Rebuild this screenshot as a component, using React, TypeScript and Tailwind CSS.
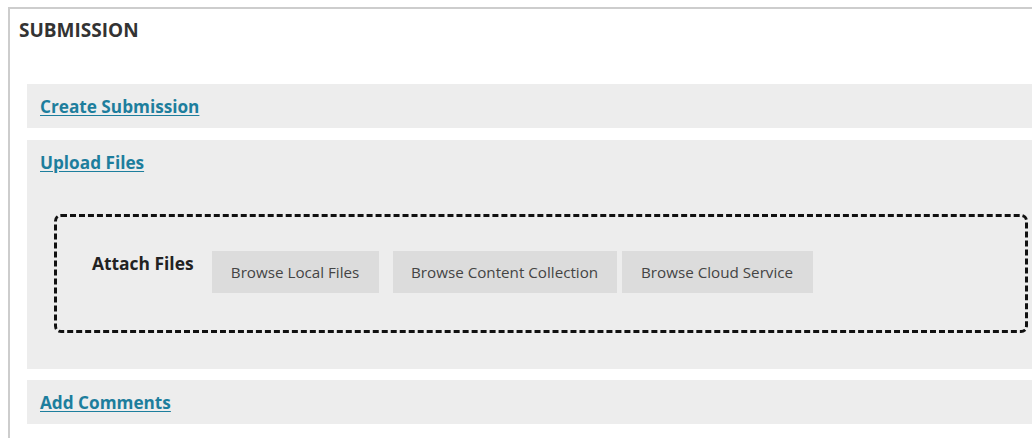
export default function App() {
  const font = { fontFamily: '"Open Sans", "Noto Sans", sans-serif' };
  return (
    <div className="h-[438px] w-[1032px] overflow-hidden bg-white pl-[8px] pt-[7px]" style={font}>
      <section className="h-[440px] w-[1100px] border-l-2 border-t-2 border-[#cdcdcd]">
        <h2 className="pl-[9px] pt-[9px] text-[19px] font-bold leading-[24px] text-[#333333]">SUBMISSION</h2>
        <div className="mt-[42px] flex flex-col gap-[12px] pl-[17px]">
          <div className="flex h-[44px] w-[1020px] items-center bg-[#ededed] px-[13px] pt-[2px]">
            <a href="#" className="text-[17.2px] font-bold text-[#1d7e9d] underline underline-offset-2">
              Create Submission
            </a>
          </div>
          <div className="w-[1020px] bg-[#ededed] pb-[36px] pt-[11px]">
            <a href="#" className="ml-[13px] text-[17.2px] font-bold leading-[24px] text-[#1d7e9d] underline underline-offset-2">
              Upload Files
            </a>
            <div className="ml-[27px] mt-[39px] h-[119px] w-[974px] rounded-[7px] border-[3px] border-dashed border-[#111111] pl-[35px] pt-[34px]">
              <div className="flex items-start">
                <span className="mr-[18px] text-[17.4px] font-bold leading-[24px] text-[#222222]">Attach Files</span>
                <button className="mr-[14px] h-[42px] w-[167px] bg-[#dcdcdc] text-[15.2px] text-[#444444]">
                  Browse Local Files
                </button>
                <button className="mr-[5px] h-[42px] w-[224px] bg-[#dcdcdc] text-[15.2px] text-[#444444]">
                  Browse Content Collection
                </button>
                <button className="h-[42px] w-[191px] bg-[#dcdcdc] text-[15.2px] text-[#444444]">
                  Browse Cloud Service
                </button>
              </div>
            </div>
          </div>
          <div className="-mt-[1px] flex h-[44px] w-[1020px] items-center bg-[#ededed] px-[13px] pt-[2px]">
            <a href="#" className="text-[17.2px] font-bold text-[#1d7e9d] underline underline-offset-2">
              Add Comments
            </a>
          </div>
        </div>
      </section>
    </div>
  );
}
